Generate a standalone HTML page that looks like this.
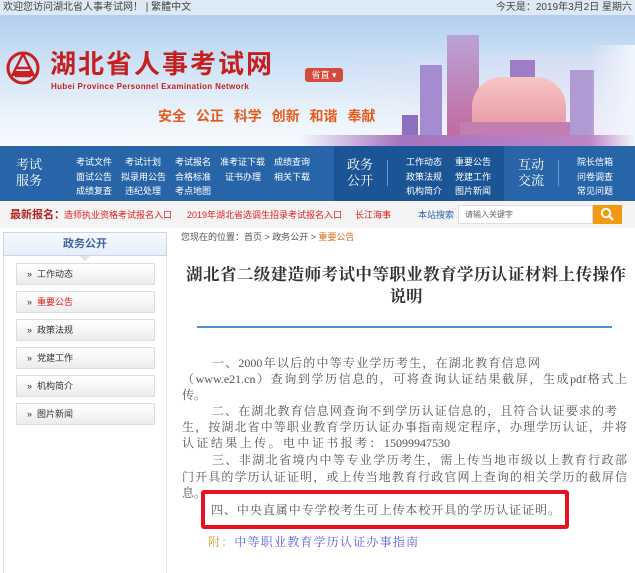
<!DOCTYPE html>
<html><head><meta charset="utf-8">
<style>
*{margin:0;padding:0;box-sizing:border-box}
body{width:635px;height:573px;overflow:hidden;background:#fff;font-family:"Liberation Sans","Noto Sans CJK SC",sans-serif;position:relative}
.a{position:absolute;white-space:nowrap}
.top{left:0;top:0;width:635px;height:15px;background:#dde9f5;font-size:10px;color:#444;line-height:15px}
.banner{left:0;top:15px;width:635px;height:131px;background:linear-gradient(180deg,#b3d0ee 0%,#d4e5f6 45%,#eef5fc 80%,#f6f9fd 100%);overflow:hidden}
.nav{left:0;top:146px;width:635px;height:55px;background:#2765a8}
.nav .lab{color:#fff;font-size:13px;line-height:16px;font-family:"Liberation Serif","Noto Serif CJK SC",serif}
.nav .l{color:#fff;font-size:9px}
.nav .dv{width:1px;height:26px;background:#6d9bd0}
.side-i{left:16px;width:139px;height:22px;border:1px solid #ddd;background:linear-gradient(#fff,#ececec);font-size:9px;line-height:21px;color:#333;padding-left:10px}
.p{left:182px;font-family:"Liberation Serif","Noto Serif CJK SC",serif;font-size:12px;color:#555;text-align:justify;text-align-last:justify;white-space:nowrap;line-height:14px}
</style></head><body>
<div class="a top"><span style="position:absolute;left:3px">欢迎您访问湖北省人事考试网！ | 繁體中文</span><span style="position:absolute;right:3px">今天是：2019年3月2日 星期六</span></div>

<div class="a banner">
  <div class="a" style="left:330px;top:40px;width:305px;height:91px;background:linear-gradient(90deg,rgba(255,255,255,0),rgba(230,220,245,.5))"></div>
  <div class="a" style="left:420px;top:50px;width:22px;height:70px;background:#a58bd0"></div>
  <div class="a" style="left:402px;top:100px;width:16px;height:30px;background:#8e70c0"></div>
  <div class="a" style="left:447px;top:20px;width:32px;height:100px;background:linear-gradient(#b9a3d8,#c46a9e)"></div>
  <div class="a" style="left:510px;top:45px;width:25px;height:30px;background:#9e7cc8"></div>
  <div class="a" style="left:570px;top:55px;width:24px;height:70px;background:#b19ad4"></div>
  <div class="a" style="left:472px;top:62px;width:94px;height:50px;border-radius:30px 30px 6px 6px;background:linear-gradient(#f7c6c3,#e89aa8);"></div>
  <div class="a" style="left:460px;top:107px;width:110px;height:16px;background:#c07fb0"></div>
  <div class="a" style="left:300px;top:120px;width:335px;height:11px;background:linear-gradient(90deg,rgba(200,170,220,0),#a573c0 30%,#c48ac8)"></div>
  <div class="a" style="left:590px;top:30px;width:45px;height:101px;background:linear-gradient(90deg,rgba(240,246,252,0),#f1f6fc)"></div>
  <svg class="a" style="left:6px;top:33px" width="34" height="42" viewBox="0 0 34 42">
    <circle cx="17" cy="20" r="15" fill="none" stroke="#c8211f" stroke-width="3"/>
    <path d="M17 6 L6 28 M17 6 L28 28 M11 20 H23 M9 28 H25" stroke="#c8211f" stroke-width="2.5" fill="none"/>
    <rect x="7" y="23" width="20" height="5" fill="#c8211f"/>
  </svg>
  <div class="a" style="left:50px;top:33px;font-size:26px;font-weight:bold;color:#c42020;letter-spacing:2px;font-family:'Noto Sans CJK SC',sans-serif;line-height:30px">湖北省人事考试网</div>
  <div class="a" style="left:51px;top:67px;font-size:8px;font-weight:bold;color:#c42020;letter-spacing:.35px">Hubei Province Personnel Examination Network</div>
  <div class="a" style="left:305px;top:53px;width:38px;height:14px;background:#d54a3a;border-radius:3px;color:#fff;font-size:9px;line-height:14px;text-align:center">省直 ▾</div>
  <div class="a" style="left:158px;top:91px;font-size:14px;font-weight:bold;color:#e75a1e;word-spacing:6px">安全 公正 科学 创新 和谐 奉献</div>
</div>

<div class="a nav">
  <div class="a" style="left:334px;top:0;width:170px;height:55px;background:#1c5596"></div>
  <div class="a lab" style="left:16px;top:11px">考试<br>服务</div>
  <div class="a l" style="left:76px;top:9px">考试文件</div><div class="a l" style="left:125px;top:9px">考试计划</div><div class="a l" style="left:175px;top:9px">考试报名</div><div class="a l" style="left:220px;top:9px">准考证下载</div><div class="a l" style="left:274px;top:9px">成绩查询</div>
  <div class="a l" style="left:76px;top:24px">面试公告</div><div class="a l" style="left:121px;top:24px">拟录用公告</div><div class="a l" style="left:175px;top:24px">合格标准</div><div class="a l" style="left:225px;top:24px">证书办理</div><div class="a l" style="left:274px;top:24px">相关下载</div>
  <div class="a l" style="left:76px;top:38px">成绩复查</div><div class="a l" style="left:125px;top:38px">违纪处理</div><div class="a l" style="left:175px;top:38px">考点地图</div>
  <div class="a lab" style="left:347px;top:11px">政务<br>公开</div>
  <div class="a dv" style="left:387px;top:14px"></div>
  <div class="a l" style="left:406px;top:9px">工作动态</div><div class="a l" style="left:455px;top:9px">重要公告</div>
  <div class="a l" style="left:406px;top:24px">政策法规</div><div class="a l" style="left:455px;top:24px">党建工作</div>
  <div class="a l" style="left:406px;top:38px">机构简介</div><div class="a l" style="left:455px;top:38px">图片新闻</div>
  <div class="a lab" style="left:518px;top:11px">互动<br>交流</div>
  <div class="a dv" style="left:558px;top:14px"></div>
  <div class="a l" style="left:577px;top:9px">院长信箱</div><div class="a l" style="left:577px;top:24px">问卷调查</div><div class="a l" style="left:577px;top:38px">常见问题</div>
</div>

<div class="a" style="left:0;top:201px;width:635px;height:27px;background:#f4f4f4"></div>
<div class="a" style="left:10px;top:206px;font-size:11px;font-weight:bold;color:#b52424">最新报名：</div>
<div class="a" style="left:64px;top:208px;font-size:9px;color:#e02020">造师执业资格考试报名入口</div>
<div class="a" style="left:187px;top:208px;font-size:9px;color:#e02020">2019年湖北省选调生招录考试报名入口</div>
<div class="a" style="left:355px;top:208px;font-size:9px;color:#e02020">长江海事</div>
<div class="a" style="left:418px;top:208px;font-size:9px;color:#2a5fb0">本站搜索</div>
<div class="a" style="left:458px;top:205px;width:135px;height:19px;background:#fff;border:1px solid #ddd;font-size:8px;color:#666;line-height:17px;padding-left:6px">请输入关键字</div>
<div class="a" style="left:593px;top:205px;width:29px;height:19px;background:#f29a0f"></div>
<svg class="a" style="left:600px;top:207px" width="15" height="15" viewBox="0 0 15 15"><circle cx="6" cy="6" r="4.2" fill="none" stroke="#fff" stroke-width="2"/><path d="M9 9 L13 13" stroke="#fff" stroke-width="2.4"/></svg>

<div class="a" style="left:3px;top:232px;width:164px;height:341px;border:1px solid #dfe6ee;border-bottom:none"></div>
<div class="a" style="left:3px;top:232px;width:164px;height:24px;background:linear-gradient(#f6f9fd,#e6eef8);border:1px solid #c7d6e8;color:#3a66a8;font-size:11px;font-weight:bold;text-align:center;line-height:22px">政务公开</div>
<div class="a" style="left:80px;top:256px;width:0;height:0;border-left:5px solid transparent;border-right:5px solid transparent;border-top:5px solid #dbe6f3"></div>
<div class="a side-i" style="top:263px">»&nbsp; 工作动态</div>
<div class="a side-i" style="top:291px">»&nbsp; <span style="color:#e01b1b">重要公告</span></div>
<div class="a side-i" style="top:319px">»&nbsp; 政策法规</div>
<div class="a side-i" style="top:347px">»&nbsp; 党建工作</div>
<div class="a side-i" style="top:375px">»&nbsp; 机构简介</div>
<div class="a side-i" style="top:403px">»&nbsp; 图片新闻</div>

<div class="a" style="left:181px;top:230px;font-size:9px;color:#555">您现在的位置：首页 &gt; 政务公开 &gt; <span style="color:#e06a1e">重要公告</span></div>
<div class="a" style="left:186px;top:264px;width:440px;text-align:justify;text-align-last:justify;font-family:'Liberation Serif','Noto Serif CJK SC',serif;font-size:16.5px;font-weight:bold;color:#333;line-height:22px">湖北省二级建造师考试中等职业教育学历认证材料上传操作</div>
<div class="a" style="left:186px;top:286px;width:440px;text-align:center;font-family:'Liberation Serif','Noto Serif CJK SC',serif;font-size:16.5px;font-weight:bold;color:#333;line-height:22px">说明</div>
<div class="a" style="left:197px;top:326px;width:415px;height:2px;background:#4e8fd0"></div>

<div class="a p" style="left:212px;top:356px;width:328px">一、2000年以后的中等专业学历考生，在湖北教育信息网</div>
<div class="a p" style="top:372px;width:445px">（www.e21.cn）查询到学历信息的，可将查询认证结果截屏，生成pdf格式上</div>
<div class="a p" style="top:388px;text-align-last:auto">传。</div>
<div class="a p" style="left:212px;top:404px;width:405px">二、在湖北教育信息网查询不到学历认证信息的，且符合认证要求的考</div>
<div class="a p" style="top:420px;width:445px">生，按湖北省中等职业教育学历认证办事指南规定程序，办理学历认证，并将</div>
<div class="a p" style="top:436px;width:268px">认证结果上传。电中证书报考：15099947530</div>
<div class="a p" style="left:212px;top:453px;width:415px">三、非湖北省境内中等专业学历考生，需上传当地市级以上教育行政部</div>
<div class="a p" style="top:470px;width:445px">门开具的学历认证证明，或上传当地教育行政官网上查询的相关学历的截屏信</div>
<div class="a p" style="top:486px;text-align-last:auto">息。</div>
<div class="a" style="left:201px;top:490px;width:368px;height:39px;border:4px solid #e8111f;border-radius:3px"></div>
<div class="a p" style="left:211px;top:503px;width:349px">四、中央直属中专学校考生可上传本校开具的学历认证证明。</div>
<div class="a p" style="left:208px;top:535px;width:210px;color:#c9a030">附：<span style="color:#5b5be0">中等职业教育学历认证办事指南</span></div>
</body></html>
